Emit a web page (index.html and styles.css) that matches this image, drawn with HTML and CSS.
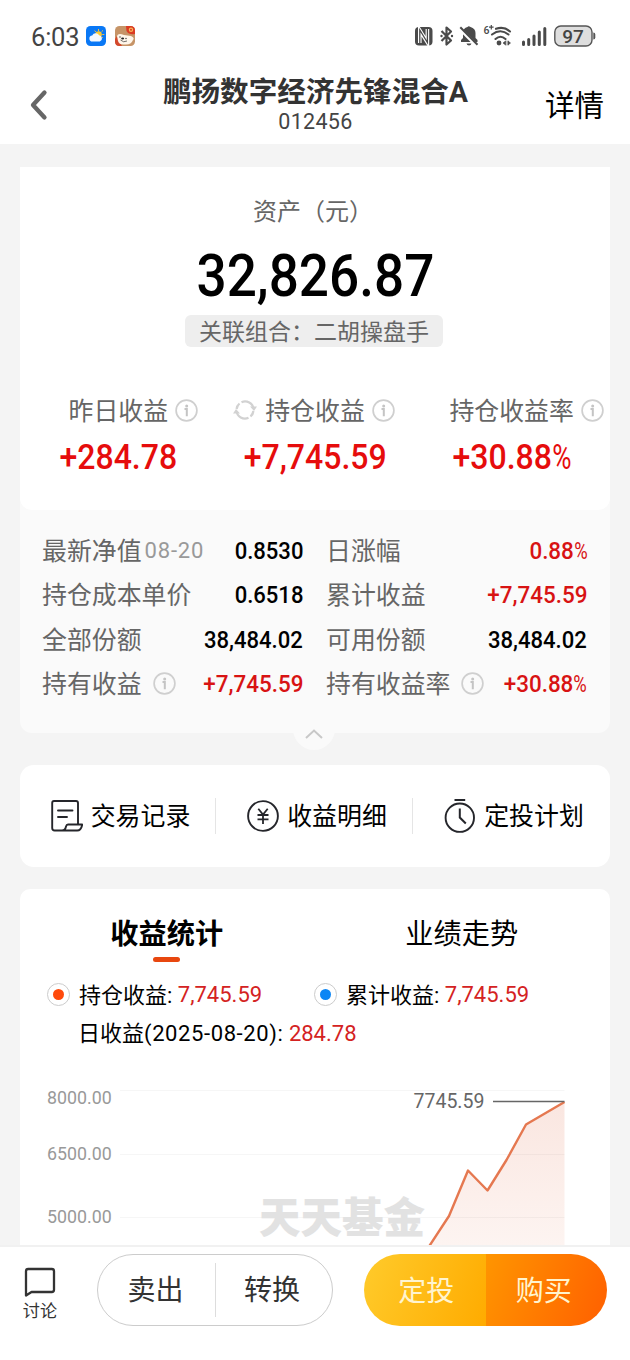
FILE: index.html
```html
<!DOCTYPE html>
<html lang="zh-CN">
<head>
<meta charset="utf-8">
<title>鹏扬数字经济先锋混合A</title>
<link rel="stylesheet" href="styles.css">
</head>
<body>
<svg class="defs" width="0" height="0">
  <symbol id="info" viewBox="0 0 23 23">
    <circle cx="11.5" cy="11.5" r="10.4" fill="none" stroke="#cfcfcf" stroke-width="1.7"/>
    <circle cx="11.7" cy="6.9" r="1.5" fill="#c4c4c4"/>
    <path d="M9.500 10h2.300v7.300" fill="none" stroke="#c4c4c4" stroke-width="2"/>
  </symbol>
</svg>
<div class="screen">
  <header class="status">
    <span class="clock">6:03</span>
    <svg class="app-weather" width="20" height="20" viewBox="0 0 20 20">
      <rect width="20" height="20" rx="4.5" fill="#0a78f5"/>
      <path d="M12.5 3v2M8.6 4.6l1.3 1.5M17 4.4l-1.5 1.4M18.3 8.5h-2M16.8 12l-1-1" stroke="#f5c23c" stroke-width="1"/>
      <circle cx="12.6" cy="8.4" r="3.2" fill="#fbc832"/>
      <path d="M6.6 15.5a3 3 0 0 1-.4-6 4 4 0 0 1 7-.2 3.2 3.2 0 0 1 .6 6.2z" fill="#f4f9ff"/>
    </svg>
    <svg class="app-dog" width="20" height="20" viewBox="0 0 20 20">
      <rect width="20" height="20" rx="4.5" fill="#c69467"/>
      <path d="M0 13l2-3 2 5 3 5H4.500Q0 20 0 15.500z" fill="#d4482c"/>
      <path d="M2 10Q3 6.500 9 9l7 1q4 2 2 4-2 5-8 4.500Q4 19 3 15z" fill="#fff6ea"/>
      <path d="M11 0h4.500Q20 0 20 4.500V8q-6 1-8.500-3z" fill="#dc3b22"/>
      <circle cx="16" cy="3.800" r="2.200" fill="#f8b85c"/><circle cx="16" cy="3.800" r="1" fill="#dc3b22"/>
      <circle cx="5" cy="11" r=".7" fill="#333"/><circle cx="11" cy="12.500" r=".7" fill="#333"/>
      <ellipse cx="7.600" cy="12.400" rx="1.500" ry="1" fill="#222"/>
      <path d="M5.500 14q3 3 6.500 1" fill="none" stroke="#333" stroke-width=".7"/>
    </svg>
    <svg class="status-icons" width="184" height="26" viewBox="414 23 184 26">
      <rect x="415" y="27" width="17.500" height="18.500" rx="4" fill="#4a4a4a"/>
      <path d="M419.800 43V30.200l7.600 12.200V29" fill="none" stroke="#fff" stroke-width="3.600"/>
      <path d="M419.800 45V30l7.600 12.500V27" fill="none" stroke="#4a4a4a" stroke-width="1.300"/>
      <path d="M441.500 31l9.500 9.500-4.500 4V27.500l4.500 4-9.500 9.500" fill="none" stroke="#4a4a4a" stroke-width="2.200" stroke-linejoin="round"/>
      <circle cx="441.500" cy="36" r="1.200" fill="#4a4a4a"/><circle cx="452" cy="36" r="1.200" fill="#4a4a4a"/>
      <path d="M461 42v-2l2-2v-5q0-5 4.500-6 1-1.500 3 0 5 1.500 5 6v5l2 2v2zM466.500 43.500h5q-.5 2-2.500 2t-2.500-2z" fill="#4a4a4a"/>
      <path d="M459.700 28.500L477 46" stroke="#fff" stroke-width="3.600"/>
      <path d="M460.300 27.300L477.500 44.700" stroke="#4a4a4a" stroke-width="2"/>
      <text x="483.500" y="34" class="wifi-gen">6</text>
      <path d="M491.300 25v4.500M489 27.200h4.600" stroke="#4a4a4a" stroke-width="1.200"/>
      <path d="M496 28.800q8-2.800 14 2.700M492 34.500q8.500-6.500 16.500 0M495.500 39q5-4.500 10 0" fill="none" stroke="#4a4a4a" stroke-width="2.100" stroke-linecap="round"/>
      <circle cx="499" cy="43" r="2.400" fill="#4a4a4a"/>
      <path d="M503 43l2.500-2v4zM510.500 43l-2.500-2v4zM506 40.500v5M508 40.500v5" fill="#4a4a4a" stroke="#4a4a4a" stroke-width=".6"/>
      <path d="M523.500 42v2.500M528.700 39.500v5M534 36v8.500M539.300 32v12.500M544.800 28.500v16" stroke="#4a4a4a" stroke-width="3" stroke-linecap="round"/>
      <rect x="554.800" y="26" width="37.200" height="20" rx="6" fill="#dedede" stroke="#555" stroke-width="1.400"/>
      <path d="M593.300 32.500q2 0 2 2v3q0 2-2 2z" fill="#555"/>
      <text x="562.300" y="43" class="battery">97</text>
    </svg>
  </header>

  <nav class="navbar">
    <svg class="back" width="18" height="32" viewBox="0 0 18 32"><path d="M14.500 3.500L3 16l11.500 12.500" fill="none" stroke="#666" stroke-width="4.300" stroke-linecap="round" stroke-linejoin="round"/></svg>
    <div class="heading">
      <h1>鹏扬数字经济先锋混合A</h1>
      <span class="code">012456</span>
    </div>
    <a class="detail">详情</a>
  </nav>

  <main class="content">
    <section class="asset">
      <div class="summary">
        <div class="caption">资产（元）</div>
        <div class="total"><span class="narrow">32,826.87</span></div>
        <div class="group">关联组合：二胡操盘手</div>
        <div class="stats">
          <div class="stat">
            <div class="stat-label">昨日收益<svg class="info after"><use href="#info"/></svg></div>
            <div class="stat-value"><span class="narrow">+284.78</span></div>
          </div>
          <div class="stat">
            <div class="stat-label"><svg class="sync" viewBox="0 0 24 24"><path d="M8.500 4.200A8.500 8.500 0 0 1 20.500 11M15.500 19.800A8.500 8.500 0 0 1 3.500 13M3.600 11A8.500 8.500 0 0 1 6.500 5.500M20.400 13A8.500 8.500 0 0 1 17.500 18.500" fill="none" stroke="#d2d2d2" stroke-width="2.300"/><path d="M17 8.500h7l-3 4.500zM7 15.500H0l3-4.500z" fill="#d2d2d2"/></svg>持仓收益<svg class="info after"><use href="#info"/></svg></div>
            <div class="stat-value"><span class="narrow">+7,745.59</span></div>
          </div>
          <div class="stat">
            <div class="stat-label">持仓收益率<svg class="info after"><use href="#info"/></svg></div>
            <div class="stat-value"><span class="narrow">+30.88<span class="pct">%</span></span></div>
          </div>
        </div>
      </div>
      <div class="facts">
        <div class="fact"><span>最新净值</span><small>08-20</small><b>0.8530</b></div>
        <div class="fact"><span>日涨幅</span><b class="up">0.88<span class="pct">%</span></b></div>
        <div class="fact"><span>持仓成本单价</span><b>0.6518</b></div>
        <div class="fact"><span>累计收益</span><b class="up">+7,745.59</b></div>
        <div class="fact"><span>全部份额</span><b>38,484.02</b></div>
        <div class="fact"><span>可用份额</span><b>38,484.02</b></div>
        <div class="fact"><span>持有收益</span><svg class="info"><use href="#info"/></svg><b class="up">+7,745.59</b></div>
        <div class="fact"><span>持有收益率</span><svg class="info"><use href="#info"/></svg><b class="up">+30.88<span class="pct">%</span></b></div>
      </div>
      <div class="fold"><svg width="18" height="10" viewBox="0 0 18 10"><path d="M1 9l8-7.500L17 9" fill="none" stroke="#c8c8c8" stroke-width="2"/></svg></div>
    </section>

    <section class="actions">
      <a class="action">
        <svg width="32" height="34" viewBox="0 0 32 34"><path d="M27 25V4q0-2-2-2H3Q1.200 2 1.200 4v25q0 2.500 2.500 2.500h22.500q4 0 5-6H17q-1.500 0-2 2-.8 4-4 4" fill="none" stroke="#25262b" stroke-width="1.900" stroke-linejoin="round"/><path d="M7 11.500h14.500M7 18h9" stroke="#25262b" stroke-width="1.900" stroke-linecap="round"/></svg>
        <span>交易记录</span>
      </a>
      <a class="action">
        <svg width="32" height="34" viewBox="0 0 32 34"><circle cx="16" cy="17" r="14.900" fill="none" stroke="#25262b" stroke-width="1.900"/><path d="M11.300 9.800l4.700 5.700 4.700-5.700M16 15.500v9.500M10.500 16h11M10.500 20.300h11" fill="none" stroke="#25262b" stroke-width="1.800"/></svg>
        <span>收益明细</span>
      </a>
      <a class="action">
        <svg width="32" height="34" viewBox="0 0 32 34"><circle cx="15.800" cy="18.700" r="14.200" fill="none" stroke="#25262b" stroke-width="1.900"/><path d="M10.500 1h10.700M15.800 9.500v9l6 6" fill="none" stroke="#25262b" stroke-width="2"/></svg>
        <span>定投计划</span>
      </a>
    </section>

    <section class="trend">
      <div class="tabs">
        <a class="tab active">收益统计</a>
        <a class="tab">业绩走势</a>
      </div>
      <div class="legend">
        <div class="key"><i class="dot orange"></i><span>持仓收益:&nbsp;</span><em>7,745.59</em></div>
        <div class="key"><i class="dot blue"></i><span>累计收益:&nbsp;</span><em>7,745.59</em></div>
      </div>
      <div class="daily">日收益<span class="date">(2025-08-20):</span> <em>284.78</em></div>
      <svg class="chart" width="590" height="180" viewBox="20 1065 590 180">
        <defs><linearGradient id="area" x1="0" y1="0" x2="0" y2="1"><stop offset="0" stop-color="#fae6e0"/><stop offset="1" stop-color="#fdf4f1"/></linearGradient></defs>
        <g class="axis"><text x="47" y="1104.200">8000.00</text><text x="47" y="1159.700">6500.00</text><text x="47" y="1223.200">5000.00</text></g>
        <path d="M430 1245L449 1216l19-45.500 19.500 20 19-30.500 19.500-35.500 38.500-22.500V1245z" fill="url(#area)"/>
        <path d="M120 1090.500h444.500M120 1154.500h444.500M120 1217.500h444.500" stroke="#000" stroke-opacity=".035"/>
        <text class="watermark" x="259" y="1233">天天基金</text>
        <path d="M429 1246.500L449 1216l19-45.500 19.500 20 19-30.500 19.500-35.500 38.500-22.500" fill="none" stroke="#e57850" stroke-width="2.400" stroke-linejoin="round"/>
        <path d="M493 1101.500h71.500" stroke="#666" stroke-width="1.700"/>
        <text class="peak" x="413.500" y="1107.500">7745.59</text>
      </svg>
    </section>
  </main>

  <footer class="bottom">
    <a class="discuss">
      <svg width="32" height="32" viewBox="0 0 32 32"><path d="M2 28.500V4.200Q2 2 4.200 2h23.600Q30 2 30 4.200v18.600q0 2.200-2.200 2.200H7.500z" fill="none" stroke="#333" stroke-width="2.300" stroke-linejoin="round"/></svg>
      <span>讨论</span>
    </a>
    <div class="pill plain"><button>卖出</button><button>转换</button></div>
    <div class="pill warm"><button>定投</button><button>购买</button></div>
  </footer>
</div>
</body>
</html>
```
FILE: styles.css
```css
* { box-sizing: border-box; }
body {
  margin: 0;
  font-family: Roboto, "Noto Sans CJK SC", sans-serif;
  color: #000;
  background: #f4f4f4;
}
svg { display: block; flex: none; }
em { font-style: normal; color: #d42222; }
.defs { position: absolute; }
.screen { width: 630px; height: 1360px; display: flex; flex-direction: column; overflow: hidden; }

.status { height: 72px; padding: 1px 0 0 31px; display: flex; align-items: center; background: #fff; flex: none; }
.clock { width: 48px; font-size: 25.500px; line-height: 30px; color: #444; white-space: nowrap; letter-spacing: -0.200px; }
.app-weather { margin: 0 0 1px 7px; }
.app-dog { margin: 0 0 1px 9px; }
.status-icons { margin: 0 32px 1px auto; }
.wifi-gen { font-size: 10.500px; font-weight: 500; fill: #4a4a4a; }
.battery { font-size: 19px; font-weight: 500; fill: #444; }

.navbar { height: 72px; padding: 0 26px 0 30px; display: flex; align-items: flex-start; background: #fff; flex: none; }
.back { margin-top: 17px; }
.heading { flex: 1; text-align: center; padding-left: 38px; }
h1 { margin: 0; padding-top: 2px; font-size: 28.600px; line-height: 37px; font-weight: 700; color: #333; }
.code { display: block; font-size: 21.500px; line-height: 22px; color: #444; letter-spacing: .3px; }
.detail { font-size: 29.500px; line-height: 68px; }

.content { flex: 1; min-height: 0; padding: 23px 20px 0; overflow: hidden; }
.asset { position: relative; height: 566px; border-radius: 0 0 12px 12px; background: #fafafa; }
.summary { height: 343px; border-radius: 0 0 12px 12px; background: #fff; padding-top: 27px; display: flex; flex-direction: column; align-items: center; }
.caption { font-size: 24px; line-height: 36px; color: #666; padding-right: 4px; }
.total { margin-top: 8px; font-size: 60px; line-height: 76px; font-weight: 500; }
.narrow { display: inline-block; transform: scaleX(.915); }
.total .narrow { transform: scaleX(.885); }
.pct { display: inline-block; font-weight: 400; transform: scaleX(.82); transform-origin: left center; margin-right: -.13em; }
.group { margin-top: 1px; margin-right: 2px; width: 258px; height: 32px; padding-top: 1px; border-radius: 6px; background: #eee; font-size: 23px; line-height: 33px; color: #666; text-align: center; }
.stats { width: 100%; margin-top: 45px; display: grid; grid-template-columns: repeat(3, 1fr); }
.stat { display: flex; flex-direction: column; align-items: center; min-width: 0; }
.stat-label { display: flex; align-items: center; white-space: nowrap; font-size: 24.900px; height: 36px; line-height: 34px; padding-top: 3px; color: #666; }
.info { width: 23px; height: 23px; }
.after { margin: 0 -30px 3px 7px; }
.sync { width: 24px; height: 24px; margin: 0 8px 3px -32px; }
.stat-value { font-size: 35px; line-height: 44px; margin-top: 8px; font-weight: 500; color: #e60c0c; }

.facts { padding: 18px 22px 0; display: grid; grid-template-columns: 261px 261px; column-gap: 23px; grid-auto-rows: 44.500px; }
.fact { display: flex; align-items: center; white-space: nowrap; font-size: 24.900px; color: #666; }
.fact > span { padding-bottom: 3px; }
.fact small { font-size: 22px; color: #999; margin-left: 3px; letter-spacing: .8px; }
.fact .info { margin-left: 11px; }
.fact b { margin-left: auto; font-size: 24.500px; font-weight: 500; color: #000; transform: scaleX(.9); transform-origin: right center; }
.fact b.up { color: #d81313; transform: scaleX(.915); }
.fold { position: absolute; z-index: 1; left: 273px; top: 541px; width: 42px; height: 42px; border-radius: 50%; background: #fafafa; display: flex; justify-content: center; padding-top: 21px; }

.actions { margin-top: 32px; height: 102px; border-radius: 14px; background: #fff; display: grid; grid-template-columns: 195px 197px 198px; align-items: center; }
.action { display: flex; align-items: center; justify-content: center; gap: 8px; height: 36px; font-size: 24.900px; border-left: 1px solid #e5e5e5; }
.action span { padding-bottom: 4px; }
.action svg { margin-bottom: 1px; }
.action:nth-child(2) { padding-left: 6px; }
.action:nth-child(3) { padding-left: 5px; }
.action:first-child { border-left: 0; padding-left: 6px; }

.trend { margin-top: 22px; height: 500px; border-radius: 10px; background: #fff; }
.tabs { display: grid; grid-template-columns: 1fr 1fr; height: 84px; padding-right: 1px; }
.tab { display: flex; flex-direction: column; align-items: center; padding-top: 26px; font-size: 28.200px; line-height: 40px; }
.active { font-weight: 700; padding-right: 1px; }
.active::after { content: ""; width: 27px; height: 5px; margin-top: 2px; border-radius: 3px; background: #e8470f; }
.legend { display: flex; padding-left: 27px; height: 43px; }
.key { width: 267px; display: flex; align-items: center; height: 43px; font-size: 22px; white-space: nowrap; }
.key span { padding-bottom: 4px; }
.dot { width: 23px; height: 23px; margin-right: 9px; border: 1px solid #ccc; border-radius: 50%; display: grid; place-items: center; }
.dot::before { content: ""; width: 11px; height: 11px; border-radius: 50%; background: #ff4a0c; }
.blue::before { background: #0c86f5; }
.daily { padding: 1px 0 0 58px; height: 49px; line-height: 34px; font-size: 22px; white-space: nowrap; }
.date { letter-spacing: .6px; }
.axis { font-size: 17.800px; fill: #999; }
.watermark { font-family: "Noto Sans CJK SC", sans-serif; font-size: 41.500px; font-weight: 900; fill: #e2e2e2; }
.peak { font-size: 19.500px; fill: #666; }

.bottom { height: 115px; flex: none; border-top: 2px solid #f1f1f1; background: #fff; display: flex; padding: 7px 23px 0; }
.discuss { width: 34px; padding-top: 13px; display: flex; flex-direction: column; align-items: center; }
.discuss span { font-size: 17.200px; line-height: 25px; color: #333; white-space: nowrap; }
.pill { height: 72px; border-radius: 36px; display: grid; grid-template-columns: 1fr 1fr; overflow: hidden; }
.pill button { border: 0; padding: 0 2px 4px 0; background: none; font: inherit; font-size: 28px; color: #333; }
.plain { width: 236px; margin-left: 40px; border: 1px solid #ccc; align-items: center; }
.plain button { height: 54px; }
.plain button + button { border-left: 1px solid #ddd; padding-right: 4px; }
.warm { width: 243px; margin-left: 31px; }
.warm button { color: #fff4cf; background: linear-gradient(110deg, #ffcb2b, #ffab00); padding: 0 0 3px 3px; }
.warm button + button { background: linear-gradient(110deg, #ff9500, #ff6500 90%); padding: 0 5px 3px 0; }
```
